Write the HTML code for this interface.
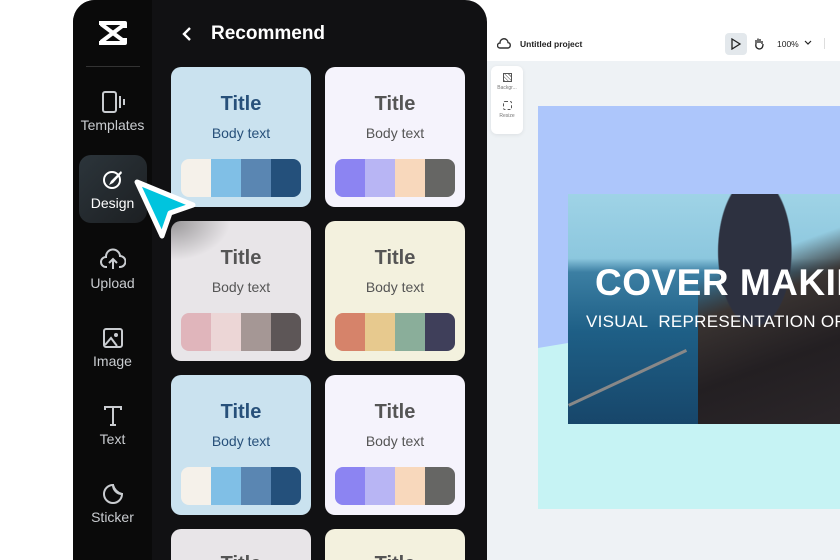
<!DOCTYPE html>
<html><head><meta charset="utf-8"><style>
*{margin:0;padding:0;box-sizing:border-box}
html,body{width:840px;height:560px;overflow:hidden}
body{background:#fff;font-family:"Liberation Sans",sans-serif}
#w{position:relative;width:840px;height:560px;overflow:hidden}
.panel{position:absolute;left:73px;top:0;width:414px;height:560px;background:#111113;border-radius:22px 22px 0 0;overflow:hidden}
.rail{position:absolute;left:0;top:0;width:79px;height:560px;background:#0a0a0a}
.ri{position:absolute;left:0;width:79px;text-align:center;color:#c9ccd0;font-size:14px}
.ri svg{display:block;margin:0 auto 3px}
.card{position:absolute;width:140px;height:140px;border-radius:10px;text-align:center;overflow:hidden}
.card .t{font-weight:bold;font-size:20px;margin-top:26px}
.card .b{font-size:14px;margin-top:9px}
.sw{position:absolute;left:10px;top:92px;width:120px;height:38px;border-radius:8px;overflow:hidden;display:flex}
.sw i{flex:1}
.ed{position:absolute;left:487px;top:0;width:353px;height:560px;overflow:hidden}
</style></head><body><div id="w">
<div class="panel">
 <div class="rail">
  <svg style="position:absolute;left:24px;top:20px" width="32" height="26" viewBox="0 0 32 26"><path d="M2 3 L28 3 L28 8 M2 23 L28 23 L28 18 M4 4 L28 22 M28 4 L4 22" stroke="#fff" stroke-width="4" fill="none" stroke-linejoin="round"/></svg>
  <div style="position:absolute;left:13px;top:66px;width:54px;height:1px;background:#333"></div>
  <div class="ri" style="top:90px"><svg width="26" height="24" viewBox="0 0 26 24"><rect x="3" y="2" width="13" height="20" rx="2" stroke="#c9ccd0" stroke-width="2" fill="none"/><path d="M20 6v12M24 9v6" stroke="#c9ccd0" stroke-width="2"/></svg>Templates</div>
  <div style="position:absolute;left:6px;top:155px;width:68px;height:68px;border-radius:12px;background:linear-gradient(135deg,#2c353b,#1c1f22)"></div>
  <div class="ri" style="top:168px;color:#fff"><svg width="24" height="24" viewBox="0 0 24 24"><circle cx="11" cy="12" r="8" stroke="#fff" stroke-width="2" fill="none"/><path d="M20 3 L10 13 L8 17 L12 15 L21 5Z" fill="#fff"/></svg>Design</div>
  <div class="ri" style="top:248px"><svg width="26" height="24" viewBox="0 0 26 24"><path d="M7 19 H6 A5 5 0 0 1 6 9 A7 7 0 0 1 20 8 A5 5 0 0 1 20 19 H19" stroke="#c9ccd0" stroke-width="2" fill="none"/><path d="M13 21V12M9 15l4-4 4 4" stroke="#c9ccd0" stroke-width="2" fill="none"/></svg>Upload</div>
  <div class="ri" style="top:326px"><svg width="24" height="24" viewBox="0 0 24 24"><rect x="3" y="3" width="18" height="18" rx="2" stroke="#c9ccd0" stroke-width="2" fill="none"/><circle cx="15" cy="9" r="2" fill="#c9ccd0"/><path d="M4 19l6-7 6 8" stroke="#c9ccd0" stroke-width="2" fill="none"/></svg>Image</div>
  <div class="ri" style="top:404px"><svg width="24" height="24" viewBox="0 0 24 24"><path d="M4 6V3H20V6M12 3V21M9 21H15" stroke="#c9ccd0" stroke-width="2" fill="none"/></svg>Text</div>
  <div class="ri" style="top:482px"><svg width="24" height="24" viewBox="0 0 24 24"><path d="M12 3A9 9 0 1 0 21 12 A9 9 0 0 1 12 3Z" stroke="#c9ccd0" stroke-width="2" fill="none"/><path d="M12 3 Q14 10 21 12" stroke="#c9ccd0" stroke-width="2" fill="none"/></svg>Sticker</div>
 </div>
 <svg style="position:absolute;left:107px;top:26px" width="14" height="16" viewBox="0 0 14 16"><path d="M10 2L4 8L10 14" stroke="#fff" stroke-width="2.4" fill="none"/></svg>
 <div style="position:absolute;left:138px;top:23px;color:#fff;font-weight:bold;font-size:19px">Recommend</div>
</div>
<div class="card" style="left:171px;top:67px;background:#cae2ef;color:#27507a"><div class="t">Title</div><div class="b">Body text</div><div class="sw"><i style="background:#f5f1ea"></i><i style="background:#80bfe6"></i><i style="background:#5a86b2"></i><i style="background:#24507b"></i></div></div>
<div class="card" style="left:325px;top:67px;background:#f5f3fc;color:#555"><div class="t">Title</div><div class="b">Body text</div><div class="sw"><i style="background:#8c84f2"></i><i style="background:#b8b5f4"></i><i style="background:#f8d8bc"></i><i style="background:#666664"></i></div></div>
<div class="card" style="left:171px;top:221px;background:#e8e5e8;color:#555"><div class="t">Title</div><div class="b">Body text</div><div class="sw"><i style="background:#e0b5bb"></i><i style="background:#ecd6d6"></i><i style="background:#a59795"></i><i style="background:#5d5657"></i></div></div>
<div class="card" style="left:325px;top:221px;background:#f3f1de;color:#555"><div class="t">Title</div><div class="b">Body text</div><div class="sw"><i style="background:#d6836a"></i><i style="background:#e7c98e"></i><i style="background:#8aae9a"></i><i style="background:#3f3f5a"></i></div></div>
<div class="card" style="left:171px;top:375px;background:#cae2ef;color:#27507a"><div class="t">Title</div><div class="b">Body text</div><div class="sw"><i style="background:#f5f1ea"></i><i style="background:#80bfe6"></i><i style="background:#5a86b2"></i><i style="background:#24507b"></i></div></div>
<div class="card" style="left:325px;top:375px;background:#f5f3fc;color:#555"><div class="t">Title</div><div class="b">Body text</div><div class="sw"><i style="background:#8c84f2"></i><i style="background:#b8b5f4"></i><i style="background:#f8d8bc"></i><i style="background:#666664"></i></div></div>
<div class="card" style="left:171px;top:529px;height:31px;border-radius:10px 10px 0 0;background:#e8e5e8;color:#555"><div class="t" style="margin-top:24px">Title</div></div>
<div class="card" style="left:325px;top:529px;height:31px;border-radius:10px 10px 0 0;background:#f3f1de;color:#555"><div class="t" style="margin-top:24px">Title</div></div>
<div style="position:absolute;left:171px;top:221px;width:60px;height:40px;background:radial-gradient(ellipse at 0 0,rgba(0,0,0,.35),transparent 70%);border-radius:10px 0 0 0"></div>
<svg style="position:absolute;left:128px;top:172px" width="80" height="75" viewBox="128 172 80 75"><path d="M137 182 L193 205 L170 213 L162 236 Z" fill="#00c4de" stroke="#fff" stroke-width="5" stroke-linejoin="round"/></svg>
<div class="ed">
 <svg style="position:absolute;left:10px;top:37px" width="14" height="14" viewBox="0 0 14 14"><path d="M4 11H3A2.5 2.5 0 0 1 3 6A4 4 0 0 1 11 5.5A2.8 2.8 0 0 1 11 11Z" stroke="#333" stroke-width="1.4" fill="none"/></svg>
 <div style="position:absolute;left:33px;top:39px;font-size:8.5px;font-weight:bold;color:#222">Untitled project</div>
 <div style="position:absolute;left:238px;top:33px;width:22px;height:22px;border-radius:4px;background:#e3e8ec"></div>
 <svg style="position:absolute;left:243px;top:38px" width="12" height="12" viewBox="0 0 12 12"><path d="M2 1L10 6L2 11Z" stroke="#222" stroke-width="1.3" fill="none"/></svg>
 <svg style="position:absolute;left:266px;top:37px" width="12" height="13" viewBox="0 0 12 13"><path d="M3 7V3M5 6V1.5M7 6V2M9 7V4M3 7Q2 11 6 12Q10 12 10 7" stroke="#222" stroke-width="1.3" fill="none"/></svg>
 <div style="position:absolute;left:290px;top:39px;font-size:8.5px;color:#222">100%</div>
 <svg style="position:absolute;left:317px;top:40px" width="8" height="6" viewBox="0 0 8 6"><path d="M1 1L4 4L7 1" stroke="#222" stroke-width="1.2" fill="none"/></svg>
 <div style="position:absolute;left:337px;top:38px;width:1px;height:11px;background:#ddd"></div>
 <div style="position:absolute;left:0;top:61px;width:353px;height:499px;background:#eef2f5"></div>
 <div style="position:absolute;left:4px;top:66px;width:32px;height:68px;background:#fff;border-radius:6px;box-shadow:0 1px 4px rgba(0,0,0,.08);text-align:center;font-size:5px;color:#777">
  <div style="width:9px;height:9px;border:1.2px solid #555;margin:7px auto 3px;background:repeating-linear-gradient(45deg,#888 0 1px,#fff 1px 2.5px)"></div>Backgr...
  <div style="width:9px;height:9px;border:1.2px dashed #555;margin:10px auto 3px;border-radius:2px"></div>Resize</div>
 <svg style="position:absolute;left:51px;top:106px" width="302" height="403" viewBox="538 106 302 403"><rect x="538" y="106" width="302" height="403" fill="#c6f3f4"/><path d="M538 106H840V300L568 343L538 348Z" fill="#adc6fb"/></svg>
 <div style="position:absolute;left:81px;top:194px;width:272px;height:230px;overflow:hidden;background:linear-gradient(180deg,#9fd3e6 0%,#8cc7de 28%,#3c7fa3 34%,#1e5f86 60%,#17466a 100%)">
  <div style="position:absolute;left:130px;top:0;width:142px;height:230px;background:radial-gradient(ellipse at 40% 25%,#2d3140 0 30%,transparent 31%),linear-gradient(160deg,transparent 30%,#3a3432 45%,#231f22 70%,#2b2629)"></div>
  <div style="position:absolute;left:0;width:130px;height:3px;background:#888;transform:rotate(-25deg);transform-origin:0 0;top:210px"></div>
  <div style="position:absolute;left:27px;top:68px;color:#fff;font-weight:bold;font-size:37px;white-space:nowrap;letter-spacing:.5px">COVER MAKING</div>
  <div style="position:absolute;left:18px;top:118px;color:#fff;font-size:17px;white-space:nowrap;letter-spacing:.3px">VISUAL&nbsp; REPRESENTATION OF</div>
 </div>
</div>
</div></body></html>
